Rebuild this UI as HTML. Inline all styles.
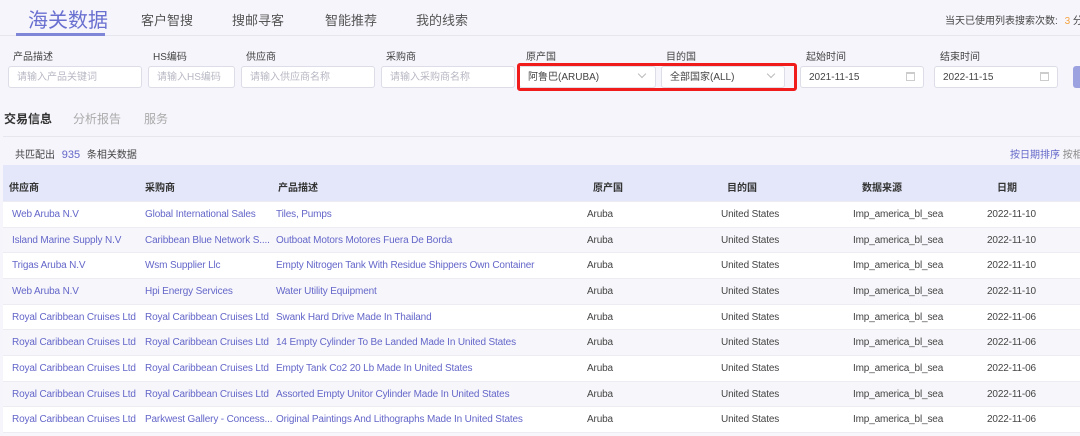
<!DOCTYPE html>
<html><head><meta charset="utf-8"><style>
*{margin:0;padding:0;box-sizing:border-box}
html,body{width:1080px;height:436px;overflow:hidden}
body{background:#f5f5fb;font-family:"Liberation Sans","Noto Sans CJK SC",sans-serif;position:relative;color:#333}
.a{position:absolute;white-space:nowrap}
.nav{font-size:13px;color:#555;top:10px}
.lbl{font-size:10px;color:#444;top:48px}
.inp{top:66px;height:22px;background:#fff;border:1px solid #dcdde6;border-radius:3px;font-size:10px;color:#b8b8c4;padding:5px 8px;line-height:12px}
.inp.v{color:#444}
.chev{position:absolute;right:10px;top:4px;width:6px;height:6px;border-right:1px solid #bbb;border-bottom:1px solid #bbb;transform:rotate(45deg)}
.cal{position:absolute;right:8px;top:5px;width:9px;height:9px;border:1px solid #ccc;border-top-width:2px}
.row{position:absolute;left:3px;width:1077px;height:26px;font-size:10px;letter-spacing:-0.15px;color:#6466c9;border-top:1px solid #ececf2}
.row span{position:absolute;top:7px;white-space:nowrap}
.row .g{color:#444}
.th{font-size:10px;font-weight:bold;color:#333;top:179px}
</style></head><body>
<div class="a" style="left:0;top:35px;width:1080px;height:1px;background:#e6e6ee"></div>
<div class="a" style="left:28px;top:4px;font-size:20px;color:#6a70d0">海关数据</div>
<div class="a" style="left:16px;top:33px;width:89px;height:3px;background:#7f86d8"></div>
<div class="a nav" style="left:141px">客户智搜</div>
<div class="a nav" style="left:232px">搜邮寻客</div>
<div class="a nav" style="left:325px">智能推荐</div>
<div class="a nav" style="left:416px">我的线索</div>
<div class="a" style="left:945px;top:12px;font-size:10px;color:#444">当天已使用列表搜索次数: <span style="color:#f5a340;margin-left:4px">3</span> 分</div>

<div class="a lbl" style="left:13px">产品描述</div>
<div class="a lbl" style="left:153px">HS编码</div>
<div class="a lbl" style="left:246px">供应商</div>
<div class="a lbl" style="left:386px">采购商</div>
<div class="a lbl" style="left:526px">原产国</div>
<div class="a lbl" style="left:666px">目的国</div>
<div class="a lbl" style="left:806px">起始时间</div>
<div class="a lbl" style="left:940px">结束时间</div>
<div class="a inp" style="left:8px;width:134px">请输入产品关键词</div>
<div class="a inp" style="left:148px;width:87px">请输入HS编码</div>
<div class="a inp" style="left:241px;width:134px">请输入供应商名称</div>
<div class="a inp" style="left:381px;width:134px">请输入采购商名称</div>
<div class="a inp v" style="left:519px;width:137px">阿鲁巴(ARUBA)<span class="chev"></span></div>
<div class="a inp v" style="left:661px;width:124px">全部国家(ALL)<span class="chev"></span></div>
<div class="a inp v" style="left:800px;width:124px">2021-11-15<span class="cal"></span></div>
<div class="a inp v" style="left:934px;width:124px">2022-11-15<span class="cal"></span></div>
<div class="a" style="left:1073px;top:66px;width:7px;height:22px;background:#9ca2e0;border-radius:3px 0 0 3px"></div>
<div class="a" style="left:517px;top:63px;width:280px;height:28px;border:3px solid #f01c1c;border-radius:3px"></div>

<div class="a" style="left:4px;top:110px;font-size:12px;font-weight:bold;color:#333">交易信息</div>
<div class="a" style="left:73px;top:110px;font-size:12px;color:#aaa">分析报告</div>
<div class="a" style="left:144px;top:110px;font-size:12px;color:#aaa">服务</div>
<div class="a" style="left:3px;top:136px;width:1077px;height:1px;background:#e6e6ee"></div>
<div class="a" style="left:15px;top:146px;font-size:10px;color:#444">共匹配出 <span style="color:#6466c9;margin:0 4px;font-size:11px">935</span> 条相关数据</div>
<div class="a" style="left:1010px;top:146px;font-size:10px;color:#6466c9">按日期排序 <span style="color:#888">按相</span></div>

<div class="a" style="left:3px;top:165px;width:1077px;height:36px;background:#e3e7f9"></div>
<div class="a th" style="left:9px">供应商</div>
<div class="a th" style="left:145px">采购商</div>
<div class="a th" style="left:278px">产品描述</div>
<div class="a th" style="left:593px">原产国</div>
<div class="a th" style="left:727px">目的国</div>
<div class="a th" style="left:862px">数据来源</div>
<div class="a th" style="left:997px">日期</div>

<div class="row" style="top:201px;background:#fff"><span style="left:9px">Web Aruba N.V</span><span style="left:142px">Global International Sales</span><span style="left:273px">Tiles, Pumps</span><span class="g" style="left:584px">Aruba</span><span class="g" style="left:718px">United States</span><span class="g" style="left:850px">Imp_america_bl_sea</span><span class="g" style="left:984px">2022-11-10</span></div>
<div class="row" style="top:227px;background:#f7f7fb"><span style="left:9px">Island Marine Supply N.V</span><span style="left:142px">Caribbean Blue Network S....</span><span style="left:273px">Outboat Motors Motores Fuera De Borda</span><span class="g" style="left:584px">Aruba</span><span class="g" style="left:718px">United States</span><span class="g" style="left:850px">Imp_america_bl_sea</span><span class="g" style="left:984px">2022-11-10</span></div>
<div class="row" style="top:252px;background:#fff"><span style="left:9px">Trigas Aruba N.V</span><span style="left:142px">Wsm Supplier Llc</span><span style="left:273px">Empty Nitrogen Tank With Residue Shippers Own Container</span><span class="g" style="left:584px">Aruba</span><span class="g" style="left:718px">United States</span><span class="g" style="left:850px">Imp_america_bl_sea</span><span class="g" style="left:984px">2022-11-10</span></div>
<div class="row" style="top:278px;background:#f7f7fb"><span style="left:9px">Web Aruba N.V</span><span style="left:142px">Hpi Energy Services</span><span style="left:273px">Water Utility Equipment</span><span class="g" style="left:584px">Aruba</span><span class="g" style="left:718px">United States</span><span class="g" style="left:850px">Imp_america_bl_sea</span><span class="g" style="left:984px">2022-11-10</span></div>
<div class="row" style="top:304px;background:#fff"><span style="left:9px">Royal Caribbean Cruises Ltd</span><span style="left:142px">Royal Caribbean Cruises Ltd</span><span style="left:273px">Swank Hard Drive Made In Thailand</span><span class="g" style="left:584px">Aruba</span><span class="g" style="left:718px">United States</span><span class="g" style="left:850px">Imp_america_bl_sea</span><span class="g" style="left:984px">2022-11-06</span></div>
<div class="row" style="top:329px;background:#f7f7fb"><span style="left:9px">Royal Caribbean Cruises Ltd</span><span style="left:142px">Royal Caribbean Cruises Ltd</span><span style="left:273px">14 Empty Cylinder To Be Landed Made In United States</span><span class="g" style="left:584px">Aruba</span><span class="g" style="left:718px">United States</span><span class="g" style="left:850px">Imp_america_bl_sea</span><span class="g" style="left:984px">2022-11-06</span></div>
<div class="row" style="top:355px;background:#fff"><span style="left:9px">Royal Caribbean Cruises Ltd</span><span style="left:142px">Royal Caribbean Cruises Ltd</span><span style="left:273px">Empty Tank Co2 20 Lb Made In United States</span><span class="g" style="left:584px">Aruba</span><span class="g" style="left:718px">United States</span><span class="g" style="left:850px">Imp_america_bl_sea</span><span class="g" style="left:984px">2022-11-06</span></div>
<div class="row" style="top:381px;background:#f7f7fb"><span style="left:9px">Royal Caribbean Cruises Ltd</span><span style="left:142px">Royal Caribbean Cruises Ltd</span><span style="left:273px">Assorted Empty Unitor Cylinder Made In United States</span><span class="g" style="left:584px">Aruba</span><span class="g" style="left:718px">United States</span><span class="g" style="left:850px">Imp_america_bl_sea</span><span class="g" style="left:984px">2022-11-06</span></div>
<div class="row" style="top:406px;background:#fff"><span style="left:9px">Royal Caribbean Cruises Ltd</span><span style="left:142px">Parkwest Gallery - Concess...</span><span style="left:273px">Original Paintings And Lithographs Made In United States</span><span class="g" style="left:584px">Aruba</span><span class="g" style="left:718px">United States</span><span class="g" style="left:850px">Imp_america_bl_sea</span><span class="g" style="left:984px">2022-11-06</span></div>
<div class="row" style="top:432px;height:4px;background:#f7f7fb"></div>
</body></html>
